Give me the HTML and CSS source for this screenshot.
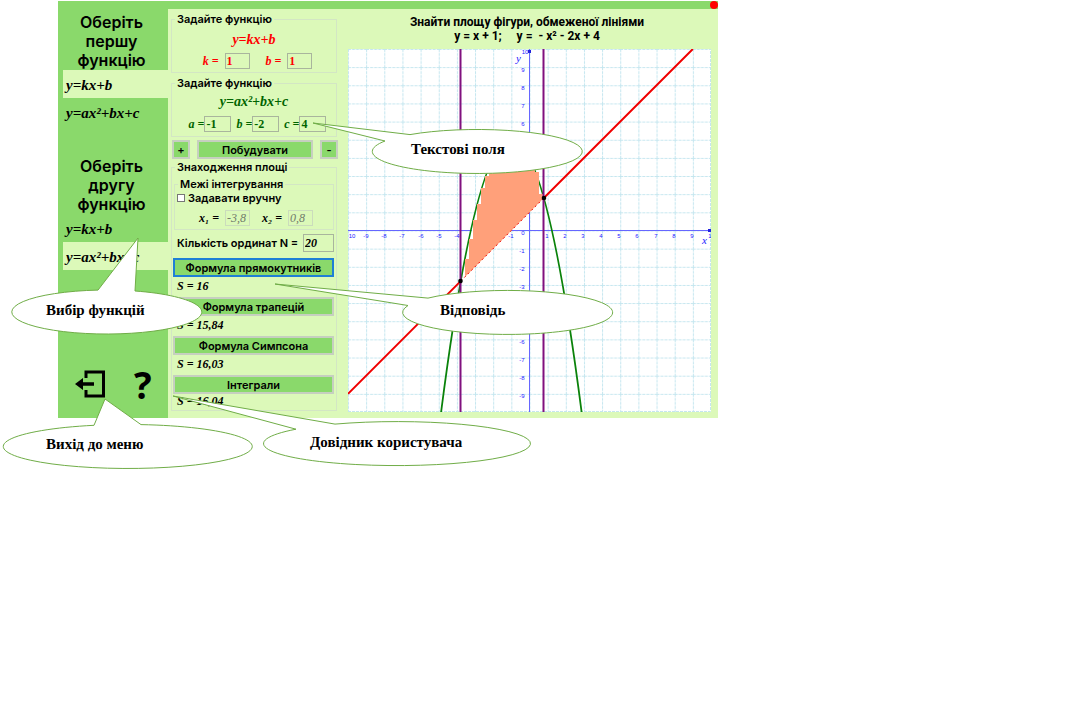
FILE: index.html
```html
<!DOCTYPE html>
<html lang="uk">
<head>
<meta charset="utf-8">
<title>Площа фігури</title>
<link rel="stylesheet" href="styles.css">
</head>
<body>
<main class="app">
  <nav class="sidebar">
    <h2 class="side-title">Оберіть першу функцію</h2>
    <button class="choice selected" type="button">y=kx+b</button>
    <button class="choice" type="button">y=ax²+bx+c</button>
    <h2 class="side-title second">Оберіть другу функцію</h2>
    <button class="choice" type="button">y=kx+b</button>
    <button class="choice selected" type="button">y=ax²+bx+c</button>
    <div class="side-tools">
      <button class="tool" type="button" aria-label="Вихід">
        <svg width="30" height="28" viewBox="0 0 30 28"><path d="M11 8V2H28.500V26H11V20" fill="none" stroke="#000" stroke-width="3"/><path d="M0 14L8 8V12.300H19V15.700H8V20Z"/></svg>
      </button>
      <button class="tool help" type="button">?</button>
    </div>
  </nav>
  <div class="workspace">
    <div class="titlebar"><button class="close" type="button" aria-label="Закрити"></button></div>
    <div class="content">
      <form class="controls">
        <fieldset class="group">
          <legend>Задайте функцію</legend>
          <p class="formula red">y=kx+b</p>
          <div class="fields red wide">
            <label class="field">k = <input value="1"></label>
            <label class="field">b = <input value="1"></label>
          </div>
        </fieldset>
        <fieldset class="group">
          <legend>Задайте функцію</legend>
          <p class="formula green">y=ax²+bx+c</p>
          <div class="fields green">
            <label class="field">a =<input value="-1"></label>
            <label class="field">b =<input value="-2"></label>
            <label class="field">c =<input value="4"></label>
          </div>
        </fieldset>
        <div class="build">
          <button class="btn" type="button">+</button>
          <button class="btn" type="button">Побудувати</button>
          <button class="btn" type="button">-</button>
        </div>
        <fieldset class="group area">
          <legend>Знаходження площі</legend>
          <fieldset class="group limits">
            <legend>Межі інтегрування</legend>
            <label class="manual"><input type="checkbox">Задавати вручну</label>
            <div class="fields">
              <label class="field">x₁ = <input value="-3,8" disabled></label>
              <label class="field">x₂ = <input value="0,8" disabled></label>
            </div>
          </fieldset>
          <label class="count">Кількість ординат N = <input value="20"></label>
          <button class="btn focus" type="button">Формула прямокутників</button>
          <output class="result">S = 16</output>
          <button class="btn" type="button">Формула трапецій</button>
          <output class="result">S = 15,84</output>
          <button class="btn" type="button">Формула Симпсона</button>
          <output class="result">S = 16,03</output>
          <button class="btn" type="button">Інтеграли</button>
          <output class="result last">S = 16,04</output>
        </fieldset>
      </form>
      <section class="plot">
        <h1 class="task">Знайти площу фігури, обмеженої лініями<br>y = x + 1; &nbsp; &nbsp; y = &nbsp;- x² - 2x + 4</h1>
        <svg class="chart" viewBox="0 0 363 363">
          <defs>
            <pattern id="grid" width="18.15" height="18.15" patternUnits="userSpaceOnUse">
              <path d="M0 .5H18.150M.5 0V18.150" stroke="#c4e6ef" stroke-dasharray="3 1" fill="none"/>
            </pattern>
          </defs>
          <rect width="363" height="363" fill="#fff"/>
          <rect width="363" height="363" fill="url(#grid)"/>
          <path d="M0 362.500H362.500V0" stroke="#c4e6ef" stroke-dasharray="3 1" fill="none"/>
          <path d="M0 181.500H363M181.500 0V363" stroke="#6666ff" fill="none"/>
          <path d="M360 180h3v3h-3zM180 1h3v3h-3z" fill="#2222dd"/>
          <g class="ticks">
            <text x="4" y="189">10</text><text x="18" y="189">-9</text><text x="36" y="189">-8</text><text x="54" y="189">-7</text><text x="73" y="189">-6</text><text x="91" y="189">-5</text><text x="109" y="189">-4</text><text x="127" y="189">-3</text><text x="145" y="189">-2</text><text x="163" y="189">-1</text>
            <text x="199" y="189">1</text><text x="217" y="189">2</text><text x="235" y="189">3</text><text x="253" y="189">4</text><text x="271" y="189">5</text><text x="289" y="189">6</text><text x="308" y="189">7</text><text x="326" y="189">8</text><text x="344" y="189">9</text><text x="362" y="189">1</text>
            <text x="177" y="5">10</text><text x="175" y="23">9</text><text x="175" y="41">8</text><text x="175" y="59">7</text><text x="175" y="77">6</text><text x="175" y="95">5</text><text x="175" y="113">4</text><text x="175" y="132">3</text><text x="175" y="150">2</text><text x="175" y="168">1</text><text x="175" y="186">0</text>
            <text x="174" y="204">-1</text><text x="174" y="222">-2</text><text x="174" y="240">-3</text><text x="174" y="259">-4</text><text x="174" y="277">-5</text><text x="174" y="295">-6</text><text x="174" y="313">-7</text><text x="174" y="331">-8</text><text x="174" y="349">-9</text>
          </g>
          <text class="axis" x="354" y="195">x</text>
          <text class="axis" x="168" y="13">y</text>
          <path d="M0 344.850L112.700 232.100M195.800 149L344.850 0" stroke="#f00000" stroke-width="2"/>
          <path d="M112.700 232L117 210L129 160L141 125V110H187L195.800 149Z" fill="#fff"/>
          <path d="M93.100 363Q163.350-181.500 233.600 363" fill="none" stroke="#0a820a" stroke-width="1.800"/>
          <path d="M117 228V210H121V190H125V171H129V155H133V139H137V127H141V110H187V123H191V145H195.800V149Z" fill="#ffa07a"/>
          <path d="M112.700 232.100L195.800 149" stroke="#f00000" stroke-dasharray="2 3"/>
          <path d="M112.500 0V363M195.500 0V363" stroke="#80107f" stroke-width="2"/>
          <circle cx="112.500" cy="232" r="2.300"/><circle cx="196" cy="149" r="2.300"/>
        </svg>
      </section>
    </div>
  </div>
</main>
<svg class="callouts" width="640" height="480" viewBox="0 0 640 480">
  <g class="bubble">
    <path d="M313 123L410 134.600A105 22 0 1 1 385 141Z"/>
    <path d="M275 284L428 298.100A105 22 0 1 1 408 305.500Z"/>
    <path d="M138 238L135 291A95 22 0 1 1 98 290.100Z"/>
    <path d="M105 399L141 424.600A124.500 22 0 1 1 94 425.300Z"/>
    <path d="M173 396L335 424.100A133.500 22 0 1 1 296 429.200Z"/>
  </g>
  <text x="411" y="154">Текстові поля</text>
  <text x="440" y="315">Відповідь</text>
  <text x="46" y="315">Вибір функцій</text>
  <text x="46" y="449">Вихід до меню</text>
  <text x="310" y="447">Довідник користувача</text>
</svg>
</body>
</html>
```
FILE: styles.css
```css
* { box-sizing: border-box; }
body {
  margin: 0;
  min-height: 100vh;
  padding: 1px 0 0 58px;
  position: relative;
  background: #fff;
  color: #000;
  font-family: Inter, "Open Sans", sans-serif;
}
button, input { font: inherit; color: inherit; margin: 0; padding: 0; }
button { border: 0; background: none; }
.app {
  display: grid;
  grid-template-columns: 110px 1fr;
  max-width: 660px;
  background: #8ad96b;
}
.sidebar {
  display: flex;
  flex-direction: column;
  padding: 12px 0 18px 5px;
}
.side-title {
  margin: 0 18px 0 10px;
  font-size: 16px;
  line-height: 19px;
  font-weight: 600;
  text-align: center;
}
.second { margin-top: 31px; }
.choice {
  height: 28px;
  padding: 2px 3px 0;
  text-align: left;
  font: italic bold 15px "Liberation Serif", serif;
}
.selected { background: #dcf9b9; }
.side-tools {
  display: flex;
  align-items: center;
  gap: 29px;
  margin-top: auto;
  padding-left: 12px;
}
.tool { height: 32px; display: flex; align-items: center; }
.help { font: bold 37px "Open Sans", sans-serif; }
.workspace { display: flex; flex-direction: column; min-width: 0; }
.titlebar { height: 8px; display: flex; justify-content: flex-end; }
.close { width: 8px; height: 8px; border-radius: 50%; background: #f00; }
.content {
  flex: 1;
  display: grid;
  grid-template-columns: 170px 1fr;
  gap: 7px;
  padding: 3px 7px 6px 3px;
  background: #dcf9b9;
}
.controls {
  display: flex;
  flex-direction: column;
  font-size: 11px;
  line-height: 14px;
  font-weight: 600;
}
.group {
  margin: 0 4px 3px 0;
  padding: 0;
  min-width: 0;
  height: 61px;
  border: 1px solid #d3e6c4;
}
.group legend { margin-left: 3px; padding: 0 2px; }
.formula {
  margin: 6px 0 5px;
  text-align: center;
  font: italic bold 14px/16px "Liberation Serif", serif;
}
.formula.green { margin: 4px 0 6px; }
.fields {
  display: flex;
  justify-content: center;
  gap: 5px;
  padding-left: 7px;
  font: italic bold 12px/16px "Liberation Serif", serif;
}
.wide { gap: 16px; }
.red { color: #f00; }
.green { color: #006400; }
.field { display: flex; align-items: center; white-space: pre; }
.wide .field, .limits .field { gap: 3px; }
.field input {
  width: 27px;
  height: 16px;
  padding: 0 1px;
  border: 1px solid #a9b59d;
  background: transparent;
  font: bold 12px "Liberation Serif", serif;
}
.wide input, .limits .field input { width: 25px; }
.build {
  display: grid;
  grid-template-columns: 18px 116px 18px;
  justify-content: space-between;
  margin: 0 3px 1px 1px;
}
.btn {
  height: 19px;
  border: 2px solid #c6cfc0;
  background: #8ad96b;
  font-weight: 600;
  line-height: 14px;
}
.area { height: auto; margin-bottom: 0; padding: 0 2px 2px 1px; display: flow-root; }
.area > legend { margin-left: 2px; }
.area > .btn { width: 100%; display: block; padding: 0; }
.limits { height: 53px; margin: 3px 0 4px 1px; }
.limits .fields { gap: 12px; padding: 5px 0 0 4px; }
.limits .field input { font-style: italic; font-weight: normal; border-color: #cbdcbc; color: #70796a; }
.manual { display: flex; align-items: center; gap: 3px; padding-left: 2px; }
.manual input {
  appearance: none;
  width: 8px;
  height: 8px;
  border: 1px solid #777;
  background: #fff;
}
.count {
  display: flex;
  align-items: center;
  justify-content: space-between;
  padding-left: 4px;
  margin-bottom: 6px;
}
.count input {
  width: 31px;
  height: 18px;
  padding: 0 1px;
  border: 1px solid #a9b59d;
  background: transparent;
  font: italic bold 12px "Liberation Serif", serif;
}
.area > .focus { border-color: #1f7fd6; }
.result {
  display: block;
  height: 20px;
  padding: 0 4px;
  font: italic bold 12px/18px "Liberation Serif", serif;
}
.last { height: 14px; line-height: 14px; }
.plot { min-width: 0; }
.task {
  margin: 3px 0 6px;
  padding-right: 5px;
  font: bold 12px/14px Roboto, sans-serif;
  text-align: center;
}
.chart { display: block; width: 100%; }
.ticks { font: 6px "Liberation Sans", sans-serif; fill: #2222ff; text-anchor: middle; }
.axis { font: italic 11px "Liberation Serif", serif; fill: #2222ff; }
.callouts { position: absolute; left: 0; top: 0; pointer-events: none; }
.bubble { fill: #fff; stroke: #70ad47; stroke-width: 1; }
.callouts text { font: bold 15px "Liberation Serif", serif; }
```
